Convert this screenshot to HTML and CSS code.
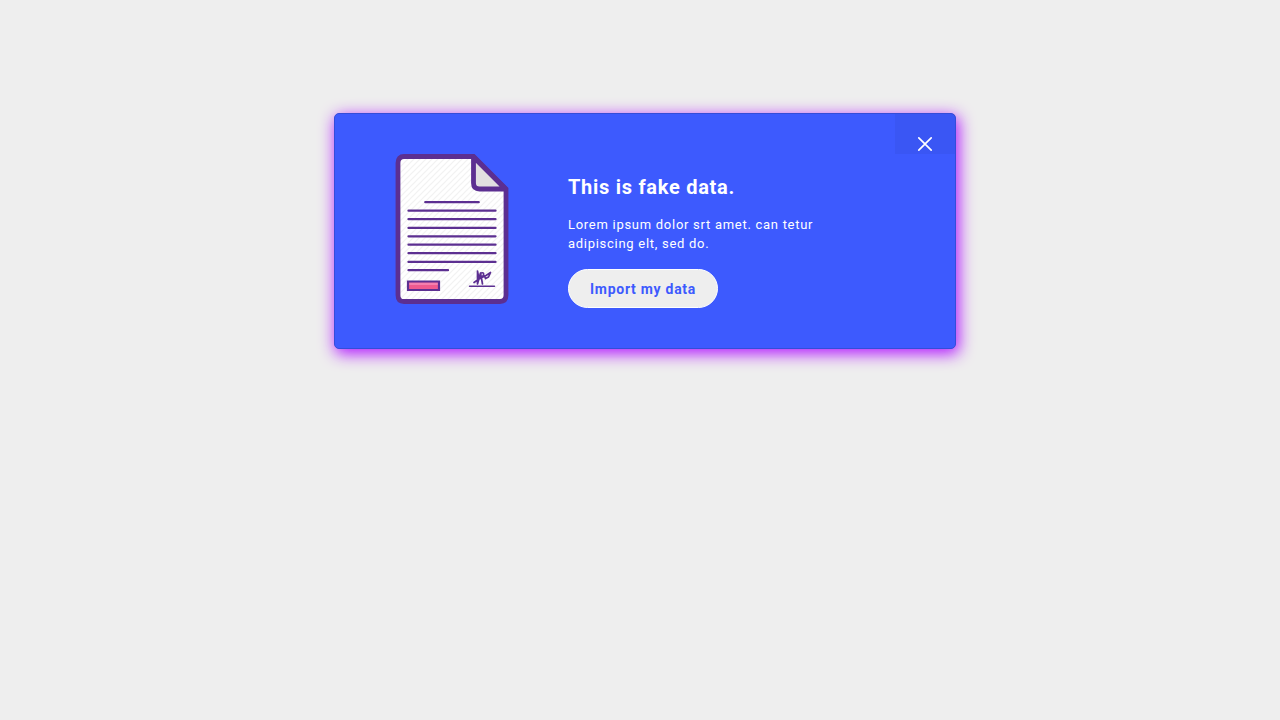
FILE: index.html
```
<!DOCTYPE html>
<html lang="en">
  <head>
    <meta charset="UTF-8" />
    <meta name="viewport" content="width=device-width, initial-scale=1.0" />
    <title>Import data</title>
    <link rel="stylesheet" href="styles.css">
  </head>
  <body>
    <main class="container">
      <section class="card flex">
        <svg class="card-image" viewBox="0 0 114 150" aria-hidden="true">
          <defs>
            <pattern id="hatch" width="6" height="6" patternUnits="userSpaceOnUse">
              <path d="M-1 1L1 -1M0 6L6 0M5 7L7 5" stroke="#000" stroke-opacity="0.05" stroke-width="1.200" />
            </pattern>
          </defs>
          <!-- sheet -->
          <path d="M9 2.500H78.500L111 35V141Q111 147.500 105 147.500H9Q3 147.500 3 141V9Q3 2.500 9 2.500Z" fill="#fff" />
          <path d="M9 2.500H78.500L111 35V141Q111 147.500 105 147.500H9Q3 147.500 3 141V9Q3 2.500 9 2.500Z" fill="url(#hatch)" stroke="#5c2f91" stroke-width="4.800" />
          <!-- folded corner -->
          <path d="M78.500 3V29Q78.500 35 84.500 35H110.500Z" fill="#e1dfe1" stroke="#5c2f91" stroke-width="4.800" stroke-linejoin="round" />
          <!-- text lines -->
          <g stroke="#5c2f91" stroke-width="2.300" stroke-linecap="round">
            <path d="M30.300 48.200H83.700" />
            <path d="M13.500 56.700H100.500M13.500 65.200H100.500M13.500 73.900H100.500M13.500 82.300H100.500M13.500 90.700H100.500M13.500 99.200H100.500M13.500 107.900H100.500" />
            <path d="M13.500 116.200H53" />
          </g>
          <!-- stamp -->
          <path d="M13 127.500H44V136H13Z" fill="#ee5a8f" />
          <path d="M14 128.500H43V131H14Z" fill="#f47fae" />
          <path d="M13 127.500H44V136H13Z" fill="none" stroke="#5c2f91" stroke-width="2.200" />
          <!-- signature -->
          <g fill="none" stroke="#5c2f91" stroke-width="1.700" stroke-linecap="round" stroke-linejoin="round">
            <path d="M79 128.500L84 125L82.500 117V130L85.500 119L87.500 130M86 119Q90 118 88 122L84 125L91 121.500L95.500 118.500L93.500 123L90.500 124.500L89.500 122" />
            <path d="M74.500 132.300H99.500" stroke-width="1.500" />
          </g>
        </svg>
        <div class="card-content">
          <h1 class="card-title">This is fake data.</h1>
          <p class="card-text">Lorem ipsum dolor srt amet. can tetur adipiscing elt, sed do.</p>
          <button class="import-button" type="button">Import my data</button>
        </div>
        <button class="close-button" type="button" aria-label="Close">
          <svg class="close-icon" viewBox="0 0 16 16" aria-hidden="true">
            <path d="M1.800 1.800L14.200 14.200M14.200 1.800L1.800 14.200" stroke="#fff" stroke-width="1.700" stroke-linecap="round" />
          </svg>
        </button>
      </section>
    </main>
  </body>
</html>
```

FILE: styles.css
```
*,
*::before,
*::after {
  box-sizing: border-box;
}
:root {
  --clr-primary: #3d5afe;
  --clr-light: #eee;
  --clr-white: #fff;
  --ff-base: Roboto, "Liberation Sans", sans-serif;
}
body {
  min-height: 100vh;
  margin: 0;
  font-family: var(--ff-base);
  letter-spacing: 0.045rem;
  color: var(--clr-white);
  background-color: var(--clr-light);
}
.flex {
  display: flex;
}
.container {
  padding: 113px 0 40px 10px;
}
.card {
  position: relative;
  align-items: flex-start;
  gap: 59px;
  max-width: 622px;
  margin-inline: auto;
  padding: 40px 60px;
  border: 1px solid #344dd8;
  border-radius: 5px;
  background-color: var(--clr-primary);
  box-shadow: 2px 4px 16px 1px #b31aff;
}
.card-image {
  flex: none;
  width: 114px;
  height: 150px;
}
.card-content {
  padding-top: 20px;
  max-width: 270px;
}
.card-title {
  margin: 0 0 15px;
  font-size: 20px;
  line-height: 26px;
  font-weight: 700;
}
.card-text {
  margin: 0 0 16px;
  font-size: 13px;
  line-height: 19px;
}
.import-button {
  height: 39px;
  padding: 0 21px;
  border: 1px solid var(--clr-white);
  border-radius: 20px;
  font: inherit;
  font-size: 14px;
  font-weight: 700;
  letter-spacing: inherit;
  color: var(--clr-primary);
  background-color: var(--clr-light);
  cursor: pointer;
}
.close-button {
  position: absolute;
  top: 0;
  right: 0;
  width: 60px;
  height: 40px;
  padding: 20px 0 0;
  border: 0;
  background-color: rgb(0 0 0 / 0.04);
  cursor: pointer;
}
.close-icon {
  display: block;
  width: 16px;
  height: 16px;
  margin: 0 auto;
}
```
